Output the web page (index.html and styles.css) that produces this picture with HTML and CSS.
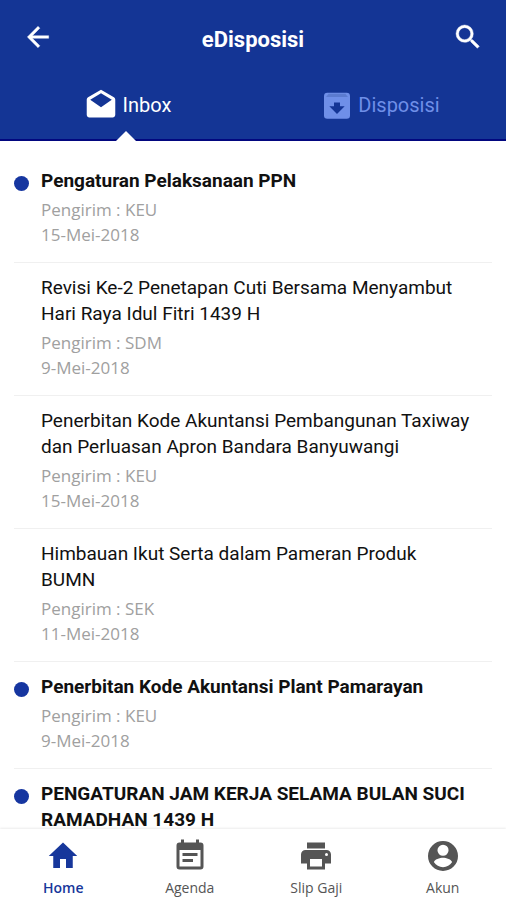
FILE: index.html
```html
<!DOCTYPE html>
<html lang="id">
<head>
<meta charset="utf-8">
<meta name="viewport" content="width=device-width, initial-scale=1">
<title>eDisposisi</title>
<link rel="stylesheet" href="styles.css">
</head>
<body>
<div class="app">
  <header class="header">
    <div class="bar">
      <button class="icon-button" type="button" aria-label="Kembali">
        <svg class="icon-large" viewBox="0 0 24 24"><path stroke="currentColor" stroke-width=".3" d="M20 11H7.800l5.600-5.600L12 4l-8 8 8 8 1.400-1.400L7.800 13H20z"/></svg>
      </button>
      <h1 class="title">eDisposisi</h1>
      <button class="icon-button" type="button" aria-label="Cari">
        <svg class="icon-large" viewBox="0 0 24 24"><path stroke="currentColor" stroke-width=".3" d="M15.500 14h-.79l-.28-.27A6.470 6.470 0 0 0 16 9.500 6.500 6.500 0 1 0 9.500 16c1.610 0 3.090-.59 4.230-1.570l.27.28v.79l5 4.990L20.490 19zm-6 0a4.500 4.500 0 1 1 0-9 4.500 4.500 0 0 1 0 9z"/></svg>
      </button>
    </div>
    <nav class="tabs">
      <a class="tab tab-active" href="#inbox">
        <svg class="icon-large" viewBox="0 0 24 24"><path d="M22.700 8c0-.8-.4-1.500-1-1.800L12 .6 2.300 6.200c-.6.300-1 1-1 1.800v11.300c0 1.100.9 2 2 2h17.400c1.100 0 2-.9 2-2zM12 13.600L3.900 8 12 3.200 20.100 8z"/></svg>
        <span>Inbox</span>
      </a>
      <a class="tab" href="#disposisi">
        <svg class="icon-large" viewBox="0 0 24 24"><rect x="3" y="2.800" width="19.500" height="19.500" rx="2.500"/><path class="lid" d="M6.500 3.500h12.500l2 2.500H4.500z"/><path class="arrow" d="M10.500 10.200h4.500v2.800h3.500L12.750 18.700 7 13h3.500z"/></svg>
        <span>Disposisi</span>
      </a>
    </nav>
  </header>

  <main class="list">
    <article class="item unread">
      <h2 class="subject">Pengaturan Pelaksanaan PPN</h2>
      <p class="meta">Pengirim : KEU</p>
      <p class="meta">15-Mei-2018</p>
    </article>
    <article class="item">
      <h2 class="subject">Revisi Ke-2 Penetapan Cuti Bersama Menyambut Hari Raya Idul Fitri 1439 H</h2>
      <p class="meta">Pengirim : SDM</p>
      <p class="meta">9-Mei-2018</p>
    </article>
    <article class="item">
      <h2 class="subject">Penerbitan Kode Akuntansi Pembangunan Taxiway dan Perluasan Apron Bandara Banyuwangi</h2>
      <p class="meta">Pengirim : KEU</p>
      <p class="meta">15-Mei-2018</p>
    </article>
    <article class="item">
      <h2 class="subject">Himbauan Ikut Serta dalam Pameran Produk BUMN</h2>
      <p class="meta">Pengirim : SEK</p>
      <p class="meta">11-Mei-2018</p>
    </article>
    <article class="item unread">
      <h2 class="subject">Penerbitan Kode Akuntansi Plant Pamarayan</h2>
      <p class="meta">Pengirim : KEU</p>
      <p class="meta">9-Mei-2018</p>
    </article>
    <article class="item unread">
      <h2 class="subject">PENGATURAN JAM KERJA SELAMA BULAN SUCI RAMADHAN 1439 H</h2>
    </article>
  </main>

  <nav class="bottom">
    <a class="link link-active" href="#home">
      <svg class="icon" viewBox="0 0 24 24"><path d="M10 20v-6h4v6h4.500v-8h3L12 3 2.500 12h3v8z"/></svg>
      <span>Home</span>
    </a>
    <a class="link" href="#agenda">
      <svg class="icon" viewBox="0 0 24 24"><path d="M17 10H7v2h10zm2-7h-1V1h-2v2H8V1H6v2H5a2 2 0 0 0-2 2v14a2 2 0 0 0 2 2h14a2 2 0 0 0 2-2V5a2 2 0 0 0-2-2zm0 16H5V8h14zm-5-5H7v2h7z"/></svg>
      <span>Agenda</span>
    </a>
    <a class="link" href="#slip-gaji">
      <svg class="icon" viewBox="0 0 24 24"><path d="M19 8H5a3 3 0 0 0-3 3v6h4v4h12v-4h4v-6a3 3 0 0 0-3-3zm-3 11H8v-5h8zm3-7a1 1 0 1 1 0-2 1 1 0 0 1 0 2zM18 3H6v4h12z"/></svg>
      <span>Slip Gaji</span>
    </a>
    <a class="link" href="#akun">
      <svg class="icon" viewBox="0 0 24 24"><path d="M12 2a10 10 0 1 0 0 20 10 10 0 0 0 0-20zm0 2.500a3.700 3.700 0 1 1 0 7.400 3.700 3.700 0 0 1 0-7.400zm0 15c-2.500 0-4.700-1.300-6-3.300 0-2 4-3.100 6-3.100s6 1.100 6 3.100c-1.300 2-3.500 3.300-6 3.300z"/></svg>
      <span>Akun</span>
    </a>
  </nav>
</div>
</body>
</html>
```

FILE: styles.css
```css
* {
  box-sizing: border-box;
}

body {
  margin: 0;
  background: #fff;
  color: #111;
  font-family: Roboto, "Liberation Sans", sans-serif;
}

h1,
h2,
p {
  margin: 0;
}

a {
  color: inherit;
  text-decoration: none;
}

svg {
  display: block;
  fill: currentColor;
}

.app {
  display: flex;
  flex-direction: column;
  height: 100vh;
}

.header {
  background: #143595;
  border-bottom: 2px solid #02077f;
  color: #fff;
}

.bar {
  display: flex;
  align-items: center;
  justify-content: space-between;
  height: 76px;
  padding: 0 22px 2px;
}

.icon-button {
  padding: 0;
  border: 0;
  background: none;
  color: inherit;
}

.icon-large {
  width: 32px;
  height: 32px;
}

.title {
  padding-top: 6px;
  font-size: 22px;
  line-height: 28px;
  font-weight: 700;
}

.tabs {
  display: grid;
  grid-template-columns: 1fr 1fr;
  padding-left: 2px;
}

.tab {
  position: relative;
  display: flex;
  align-items: center;
  justify-content: center;
  gap: 6px;
  height: 63px;
  padding-bottom: 6px;
  color: #6f8fe8;
  font-size: 20px;
}

.tab-active {
  color: #fff;
}

.tab-active::after {
  content: "";
  position: absolute;
  bottom: -2px;
  left: 50%;
  margin-left: -12px;
  border: 10px solid transparent;
  border-top: 0;
  border-bottom-color: #fff;
}

.lid {
  fill: #5b7bd0;
}

.arrow {
  fill: #143595;
}

.list {
  flex: 1;
  min-height: 0;
  overflow: hidden;
  padding: 15px 14px 0;
}

.item {
  position: relative;
  padding: 12px 20px 15px 27px;
  border-bottom: 1px solid #f0f0f0;
}

.unread::before {
  content: "";
  position: absolute;
  top: 20px;
  left: 0;
  width: 15px;
  height: 15px;
  border-radius: 50%;
  background: #1636a0;
}

.subject {
  margin-bottom: 3px;
  font-size: 19px;
  line-height: 26px;
  font-weight: 400;
}

.unread .subject {
  font-weight: 700;
}

.meta {
  color: #a0a0a0;
  font-family: "Open Sans", "Noto Sans", sans-serif;
  font-size: 17px;
  line-height: 25px;
}

.bottom {
  display: grid;
  grid-template-columns: repeat(4, 1fr);
  height: 71px;
  background: #fff;
  box-shadow: 0 -1px 2px rgba(0, 0, 0, 0.08);
  color: #555;
  font-family: "Open Sans", "Noto Sans", sans-serif;
  font-size: 14px;
  line-height: 18px;
  font-weight: 500;
}

.link {
  display: flex;
  flex-direction: column;
  align-items: center;
  gap: 5px;
  padding-top: 9px;
}

.link-active {
  color: #17379b;
  font-weight: 600;
}

.icon {
  width: 36px;
  height: 36px;
}
```
